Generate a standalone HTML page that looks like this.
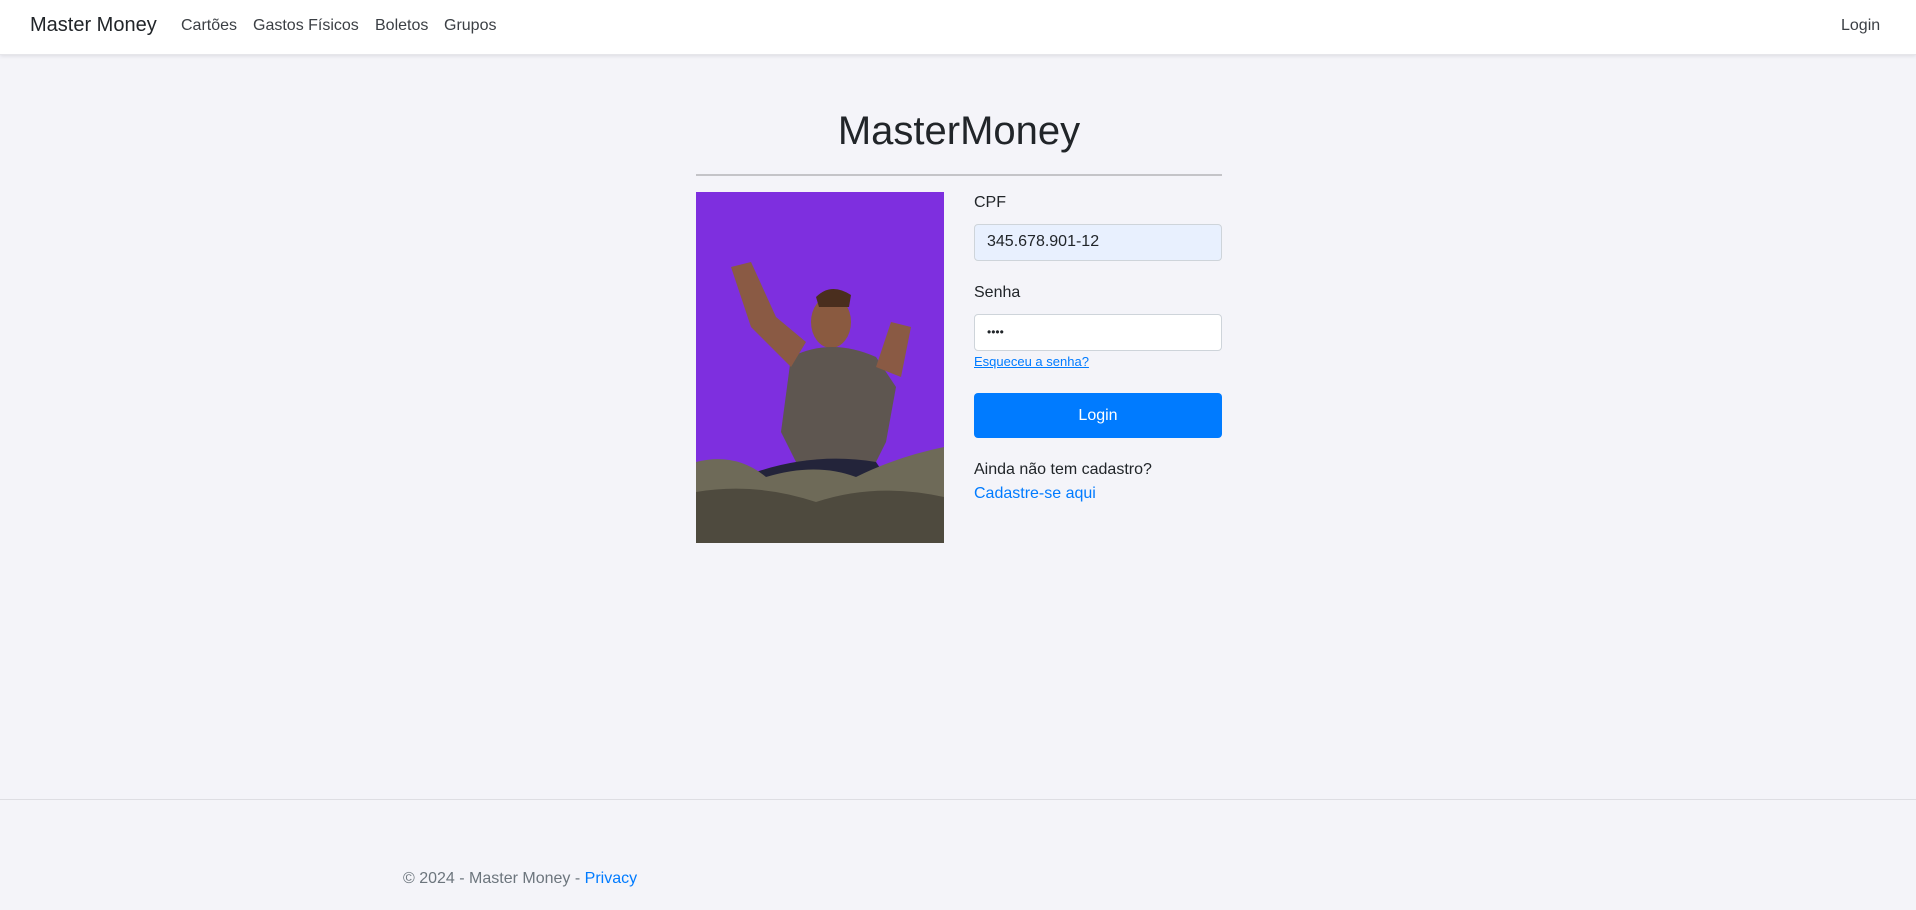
<!DOCTYPE html>
<html><head><meta charset="utf-8"><style>
*{box-sizing:border-box;margin:0;padding:0}
body{width:1916px;height:910px;background:#f4f4f9;font-family:"Liberation Sans",Arial,sans-serif;color:#212529;position:relative;overflow:hidden}
.nav{position:absolute;left:0;top:0;width:1916px;height:55px;background:#fff;box-shadow:0 1px 4px rgba(0,0,0,.1);border-bottom:1px solid #e6e6ea}
.a{position:absolute;white-space:nowrap}
.brand{left:30px;top:14px;font-size:20px;color:#212529}
.nl{top:17px;font-size:16px;color:#3b3f44}
.title{left:696px;width:526px;text-align:center;top:109px;font-size:40px;color:#212529}
.hr{left:696px;top:174px;width:526px;height:2px;background:#c4c4c8}
.lbl{font-size:16px;color:#212529;left:974px}
.inp{left:974px;width:248px;height:37px;border:1px solid #ced4da;border-radius:4px;font-size:16px;padding:8px 12px}
.btn{left:974px;top:393px;width:248px;height:45px;background:#007bff;border-radius:4px;color:#fff;font-size:16px;text-align:center;line-height:45px}
.foot{left:0;top:799px;width:1916px;height:1px;background:#dedee3}
</style></head><body>
<div class="nav">
<div class="a brand">Master Money</div>
<div class="a nl" style="left:181px">Cartões</div>
<div class="a nl" style="left:253px">Gastos Físicos</div>
<div class="a nl" style="left:375px">Boletos</div>
<div class="a nl" style="left:444px">Grupos</div>
<div class="a nl" style="left:1841px">Login</div>
</div>
<div class="a title">MasterMoney</div>
<div class="a hr"></div>
<svg class="a" style="left:696px;top:192px" width="248" height="351" viewBox="0 0 248 351">
<rect width="248" height="351" fill="#7e2fdf"/>
<ellipse cx="135" cy="130" rx="20" ry="26" fill="#8a5a40"/>
<path d="M120 105 q15 -15 35 -2 l-2 12 -30 0z" fill="#4a2e1e"/>
<path d="M95 165 q40 -20 85 0 l20 30 -10 55 -20 40 -60 0 -25 -50z" fill="#5e5650"/>
<path d="M95 175 l-40 -40 -20 -60 20 -5 25 55 30 25z" fill="#8a5a44"/>
<path d="M180 175 l15 -45 20 5 -10 50z" fill="#8a5a44"/>
<path d="M60 280 q60 -20 120 -10 l20 30 -150 0z" fill="#23243a"/>
<path d="M0 270 q40 -10 70 15 q50 -15 90 0 q40 -20 88 -30 l0 96 -248 0z" fill="#6e6a58"/>
<path d="M0 300 q60 -10 120 10 q60 -20 128 -5 l0 46 -248 0z" fill="#4e4a3e"/>
</svg>
<div class="a lbl" style="top:194px">CPF</div>
<div class="a inp" style="top:224px;background:#e8f0fe">345.678.901-12</div>
<div class="a lbl" style="top:284px">Senha</div>
<div class="a inp" style="top:314px;background:#fff;font-size:12px;padding-top:10px">&#8226;&#8226;&#8226;&#8226;</div>
<div class="a" style="left:974px;top:354px;font-size:13px;color:#007bff;text-decoration:underline">Esqueceu a senha?</div>
<div class="a btn">Login</div>
<div class="a lbl" style="top:461px">Ainda não tem cadastro?</div>
<div class="a lbl" style="top:485px;color:#007bff">Cadastre-se aqui</div>
<div class="a foot"></div>
<div class="a" style="left:403px;top:870px;font-size:16px;color:#6c757d">© 2024 - Master Money - <span style="color:#007bff">Privacy</span></div>
</body></html>
